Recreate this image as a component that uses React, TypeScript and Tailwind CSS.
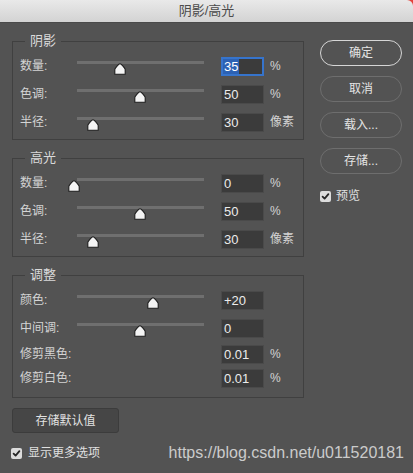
import React from "react";

const FONT = "font-['Liberation_Sans','Noto_Sans_CJK_SC',sans-serif]";

function Thumb({ x }: { x: number }) {
  return (
    <svg
      width="12"
      height="12"
      viewBox="0 0 12 12"
      className="absolute top-[11px]"
      style={{ left: x - 6 }}
    >
      <path
        d="M6 0.8 C7 0.8 11.2 5 11.2 6.6 L11.2 11.2 L0.8 11.2 L0.8 6.6 C0.8 5 5 0.8 6 0.8 Z"
        fill="#f4f4f4"
        stroke="#1c1c1c"
        strokeWidth="1.1"
        strokeLinejoin="round"
      />
    </svg>
  );
}

function Slider({ x }: { x: number }) {
  return (
    <div className="relative w-[127px] h-[28px] shrink-0">
      <div className="absolute left-0 right-0 top-[9px] h-[3px] bg-[#6f6f6f]" />
      <Thumb x={x} />
    </div>
  );
}

function Input({ value, focused }: { value: string; focused?: boolean }) {
  if (focused) {
    return (
      <div className="w-[43px] h-[19px] shrink-0 border-2 border-[#3674cc] bg-[#3b3b3b] flex items-center">
        <span className="bg-[#2c62b4] text-white text-[13px] leading-[15px] h-[15px] pl-[1px] pr-[1px]">
          {value}
        </span>
      </div>
    );
  }
  return (
    <div className="w-[43px] h-[19px] shrink-0 border border-[#4a4a4a] bg-[#3b3b3b] flex items-center pl-[2px]">
      <span className="text-[#ececec] text-[13px] leading-[15px]">{value}</span>
    </div>
  );
}

function Row({
  label,
  thumb,
  value,
  unit,
  focused,
  h = "h-[28px]",
}: {
  label: string;
  thumb?: number;
  value: string;
  unit?: string;
  focused?: boolean;
  h?: string;
}) {
  return (
    <div className={`flex items-center ${h} pl-[7px]`}>
      <div className="w-[57px] shrink-0 text-[12px] leading-[16px] text-[#d4d4d4] whitespace-nowrap">
        {label}
      </div>
      {thumb !== undefined ? <Slider x={thumb} /> : <div className="w-[127px] shrink-0" />}
      <div className="w-[17px] shrink-0" />
      <Input value={value} focused={focused} />
      {unit && (
        <span className="ml-[6px] text-[12px] leading-[16px] text-[#d4d4d4]">{unit}</span>
      )}
    </div>
  );
}

function Group({
  title,
  children,
  pb,
}: {
  title: string;
  children: React.ReactNode;
  pb: string;
}) {
  return (
    <div className={`w-[292px] border border-[#404040] flex flex-col ${pb}`}>
      <span className="self-start -mt-[9px] ml-[12px] px-[5px] bg-[#535353] text-[13px] leading-[16px] text-[#dadada]">
        {title}
      </span>
      <div className="mt-[3px] flex flex-col">{children}</div>
    </div>
  );
}

function Check() {
  return (
    <div className="w-[11px] h-[11px] rounded-[2px] bg-[#dcdcdc] flex items-center justify-center shrink-0">
      <svg width="9" height="9" viewBox="0 0 9 9">
        <path
          d="M1.6 4.6 L3.6 6.6 L7.4 2.2"
          fill="none"
          stroke="#262626"
          strokeWidth="1.8"
          strokeLinecap="round"
          strokeLinejoin="round"
        />
      </svg>
    </div>
  );
}

function RoundButton({ label, primary }: { label: string; primary?: boolean }) {
  return (
    <div
      className={`w-[82px] h-[26px] rounded-full flex items-center justify-center text-[12px] leading-[16px] text-[#e4e4e4] ${
        primary ? "border-[1.5px] border-[#d6d6d6]" : "border border-[#6e6e6e]"
      }`}
    >
      {label}
    </div>
  );
}

export default function App() {
  return (
    <div className={`${FONT} relative w-[413px] h-[473px] bg-[#535353] overflow-hidden flex flex-col`}>
      <div className="absolute right-0 top-0 w-[6px] h-[6px] bg-[#e3403a]" />
      <div className="relative z-10 h-[23px] shrink-0 rounded-tr-[6px] bg-gradient-to-b from-[#e9e9e9] to-[#d3d3d3] border-b border-[#4a4a4a] flex items-center justify-center">
        <span className="text-[13px] leading-[16px] text-[#4b4b4b]">阴影/高光</span>
      </div>

      <div className="flex">
        <div className="flex flex-col pl-[12px]">
          <div className="mt-[18px]">
            <Group title="阴影" pb="pb-[3px]">
              <Row label="数量:" thumb={43} value="35" unit="%" focused />
              <Row label="色调:" thumb={63} value="50" unit="%" />
              <Row label="半径:" thumb={16} value="30" unit="像素" />
            </Group>
          </div>
          <div className="mt-[18px]">
            <Group title="高光" pb="pb-[3px]">
              <Row label="数量:" thumb={-3} value="0" unit="%" />
              <Row label="色调:" thumb={63} value="50" unit="%" />
              <Row label="半径:" thumb={16} value="30" unit="像素" />
            </Group>
          </div>
          <div className="mt-[18px]">
            <Group title="调整" pb="pb-[7px]">
              <Row label="颜色:" thumb={76} value="+20" />
              <Row label="中间调:" thumb={63} value="0" />
              <Row label="修剪黑色:" value="0.01" unit="%" h="h-[24px]" />
              <Row label="修剪白色:" value="0.01" unit="%" h="h-[24px]" />
            </Group>
          </div>
          <div className="mt-[10px] w-[107px] h-[25px] rounded-[3px] bg-[#464646] border border-[#3c3c3c] flex items-center justify-center text-[12px] leading-[16px] text-[#e2e2e2]">
            存储默认值
          </div>
        </div>

        <div className="ml-[16px] mt-[17px] flex flex-col gap-[10px]">
          <RoundButton label="确定" primary />
          <RoundButton label="取消" />
          <RoundButton label="载入..." />
          <RoundButton label="存储..." />
          <div className="mt-[4px] flex items-center gap-[5px]">
            <Check />
            <span className="text-[12px] leading-[16px] text-[#e0e0e0]">预览</span>
          </div>
        </div>
      </div>

      <div className="mt-[10px] h-[20px] flex items-center pl-[11px] pr-[9px]">
        <Check />
        <span className="ml-[6px] text-[12px] leading-[16px] text-[#e0e0e0]">显示更多选项</span>
        <span className="ml-auto text-[16px] leading-[20px] text-[#cbcbcb]">
          https://blog.csdn.net/u011520181
        </span>
      </div>
    </div>
  );
}
